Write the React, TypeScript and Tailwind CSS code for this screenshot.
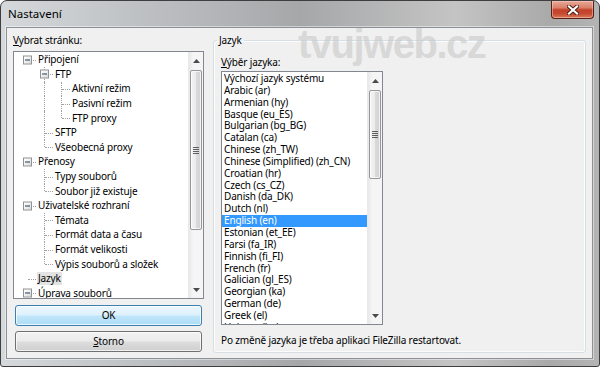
import React from 'react';

type Line = 'none' | 'full' | 'top';

interface TreeRow {
  label: string;
  level: number;
  box?: boolean;
  // vertical line per column, index = column
  cols: Line[];
  selected?: boolean;
}

const treeRows: TreeRow[] = [
  { label: 'Připojení', level: 0, box: true, cols: ['none'] },
  { label: 'FTP', level: 1, box: true, cols: ['none', 'full'] },
  { label: 'Aktivní režim', level: 2, cols: ['none', 'full', 'full'] },
  { label: 'Pasivní režim', level: 2, cols: ['none', 'full', 'full'] },
  { label: 'FTP proxy', level: 2, cols: ['none', 'full', 'top'] },
  { label: 'SFTP', level: 1, cols: ['none', 'full'] },
  { label: 'Všeobecná proxy', level: 1, cols: ['none', 'top'] },
  { label: 'Přenosy', level: 0, box: true, cols: ['none'] },
  { label: 'Typy souborů', level: 1, cols: ['none', 'full'] },
  { label: 'Soubor již existuje', level: 1, cols: ['none', 'top'] },
  { label: 'Uživatelské rozhraní', level: 0, box: true, cols: ['none'] },
  { label: 'Témata', level: 1, cols: ['none', 'full'] },
  { label: 'Formát data a času', level: 1, cols: ['none', 'full'] },
  { label: 'Formát velikosti', level: 1, cols: ['none', 'full'] },
  { label: 'Výpis souborů a složek', level: 1, cols: ['none', 'top'] },
  { label: 'Jazyk', level: 0, cols: ['none'], selected: true },
  { label: 'Úprava souborů', level: 0, box: true, cols: ['none'] },
];

const languages = [
  'Výchozí jazyk systému',
  'Arabic (ar)',
  'Armenian (hy)',
  'Basque (eu_ES)',
  'Bulgarian (bg_BG)',
  'Catalan (ca)',
  'Chinese (zh_TW)',
  'Chinese (Simplified) (zh_CN)',
  'Croatian (hr)',
  'Czech (cs_CZ)',
  'Danish (da_DK)',
  'Dutch (nl)',
  'English (en)',
  'Estonian (et_EE)',
  'Farsi (fa_IR)',
  'Finnish (fi_FI)',
  'French (fr)',
  'Galician (gl_ES)',
  'Georgian (ka)',
  'German (de)',
  'Greek (el)',
  'Hebrew (he)',
];

function PlusBox() {
  return (
    <span className="absolute left-[4px] top-1/2 z-10 flex h-[9px] w-[9px] -translate-y-1/2 items-center justify-center border border-[#919191] bg-[linear-gradient(135deg,#ffffff_0%,#f0f0f0_50%,#d6d6d6_100%)]">
      <span className="h-px w-[5px] bg-[#1f3b63]" />
    </span>
  );
}

function TreeCell({ line, own, box }: { line: Line; own: boolean; box?: boolean }) {
  return (
    <span className="relative h-full w-[17px] shrink-0">
      {line === 'full' && (
        <span className="absolute bottom-0 left-[8px] top-0 border-l border-dotted border-[#a0a0a0]" />
      )}
      {line === 'top' && (
        <span className="absolute left-[8px] top-0 h-1/2 border-l border-dotted border-[#a0a0a0]" />
      )}
      {own && (
        <span className="absolute left-[9px] right-0 top-1/2 border-t border-dotted border-[#a0a0a0]" />
      )}
      {own && box && <PlusBox />}
    </span>
  );
}

function ArrowUp() {
  return (
    <svg width="7" height="4" viewBox="0 0 7 4">
      <path d="M0 4 L3.5 0 L7 4 Z" fill="#4a4a4a" />
    </svg>
  );
}

function ArrowDown() {
  return (
    <svg width="7" height="4" viewBox="0 0 7 4">
      <path d="M0 0 L3.5 4 L7 0 Z" fill="#4a4a4a" />
    </svg>
  );
}

function Thumb({ className }: { className: string }) {
  return (
    <div
      className={`mx-[1px] flex items-center justify-center rounded-[2px] border border-[#979797] bg-[linear-gradient(90deg,#f4f4f4_0%,#ececec_45%,#dadada_55%,#d2d2d2_100%)] shadow-[inset_0_0_0_1px_rgba(255,255,255,0.7)] ${className}`}
    >
      <div className="flex w-[6px] flex-col gap-[1px]">
        <span className="h-px bg-[#5e5e5e]" />
        <span className="h-px bg-[#5e5e5e]" />
        <span className="h-px bg-[#5e5e5e]" />
        <span className="h-px bg-[#5e5e5e]" />
      </div>
    </div>
  );
}

function ScrollBar({ thumbClass }: { thumbClass: string }) {
  return (
    <div className="flex w-[15px] shrink-0 flex-col border-l border-[#e9e9e9] bg-[linear-gradient(90deg,#e8e8e8_0%,#f5f5f5_30%,#f5f5f5_100%)]">
      <div className="flex h-[17px] shrink-0 items-center justify-center">
        <ArrowUp />
      </div>
      <div className="flex-1">
        <Thumb className={thumbClass} />
      </div>
      <div className="flex h-[17px] shrink-0 items-center justify-center">
        <ArrowDown />
      </div>
    </div>
  );
}

function CloseButton() {
  return (
    <div className="absolute right-[5px] top-0 flex h-[18px] w-[43px] items-center justify-center rounded-b-[4px] border border-t-0 border-[#5a1f14] bg-[linear-gradient(180deg,#e8a898_0%,#d98068_40%,#c2412a_52%,#c74a30_75%,#d9795c_100%)] shadow-[inset_0_0_0_1px_rgba(255,220,210,0.45)]">
      <svg width="12" height="10" viewBox="0 0 12 10">
        <path d="M2 1.5 L10 8.5 M10 1.5 L2 8.5" stroke="#4a1a12" strokeWidth="4" strokeLinecap="square" />
        <path d="M2 1.5 L10 8.5 M10 1.5 L2 8.5" stroke="#ffffff" strokeWidth="2.2" strokeLinecap="square" />
      </svg>
    </div>
  );
}

export default function App() {
  return (
    <div className="relative flex h-[367px] w-[600px] flex-col overflow-hidden rounded-t-[7px] rounded-b-[3px] border border-[#3e3e3e] bg-[linear-gradient(90deg,#d6d9dc_0%,#bfc2c5_22%,#a6a7a9_50%,#c4c4c4_76%,#a9a9a9_92%,#b4b4b4_100%)] font-['Noto_Sans','Open_Sans',sans-serif] text-[10px] tracking-[-0.15px] text-black">
      {/* title bar */}
      <div className="flex h-[26px] shrink-0 items-center pl-[7px] text-[11.5px] tracking-normal">
        Nastavení
      </div>
      <CloseButton />

      {/* client area */}
      <div className="mb-[7px] ml-[5px] mr-[6px] flex flex-1 gap-[9px] border border-[#8b9197] bg-[#f0f0f0] px-[6px] pb-[5px] pt-[5px] shadow-[0_0_0_1px_rgba(255,255,255,0.45)]">
        {/* left column */}
        <div className="flex w-[191px] shrink-0 flex-col">
          <div className="h-[14px] leading-[14px]">
            <span className="underline">V</span>ybrat stránku:
          </div>
          <div className="mt-[4px] flex h-[248px] border border-[#828790] bg-white">
            <div className="flex-1 overflow-hidden pl-[5px] pt-[0.5px]">
              {treeRows.map((row) => (
                <div key={row.label} className="flex h-[14.6px] items-center">
                  {row.cols.map((line, i) => (
                    <TreeCell key={i} line={line} own={i === row.level} box={row.box} />
                  ))}
                  <span
                    className={`ml-[1px] whitespace-nowrap px-[1px] leading-[13px] ${
                      row.selected ? 'bg-[#e3e3e3]' : ''
                    }`}
                  >
                    {row.label}
                  </span>
                </div>
              ))}
            </div>
            <ScrollBar thumbClass="mt-[1px] h-[160px]" />
          </div>
          <button className="mx-[2px] mt-[6px] h-[21px] rounded-[3px] border border-[#3c7fb1] bg-[linear-gradient(180deg,#ecf7fd_0%,#ddf1fc_48%,#c1e6fb_52%,#acdcf6_100%)] shadow-[inset_0_0_0_1px_rgba(255,255,255,0.75)]">
            OK
          </button>
          <button className="mx-[2px] mt-[5px] h-[21px] rounded-[3px] border border-[#707070] bg-[linear-gradient(180deg,#f2f2f2_0%,#ebebeb_48%,#dddddd_52%,#cfcfcf_100%)] shadow-[inset_0_0_0_1px_rgba(255,255,255,0.7)]">
            <span className="underline">S</span>torno
          </button>
        </div>

        {/* right group box */}
        <fieldset className="flex-1 rounded-[3px] border border-[#d5dfe5] px-[7px] pb-[4px] shadow-[inset_0_0_0_1px_rgba(255,255,255,0.8)]">
          <legend className="ml-[-4px] px-[2px] leading-[14px]">Jazyk</legend>
          <div className="mt-[8px] h-[14px] leading-[14px]">
            <span className="underline">V</span>ýběr jazyka:
          </div>
          <div className="mt-[2px] flex h-[254px] w-[162px] border border-[#828790] bg-white">
            <div className="flex-1 overflow-hidden pt-[1px]">
              {languages.map((lang) => (
                <div
                  key={lang}
                  className={`flex h-[11.85px] items-center whitespace-nowrap pl-[2px] leading-[11.85px] ${
                    lang === 'English (en)' ? 'bg-[#3399ff] text-white' : ''
                  }`}
                >
                  {lang}
                </div>
              ))}
            </div>
            <ScrollBar thumbClass="mt-[1px] h-[89px]" />
          </div>
          <div className="mt-[8px] h-[14px] leading-[14px]">
            Po změně jazyka je třeba aplikaci FileZilla restartovat.
          </div>
        </fieldset>
      </div>

      {/* watermark */}
      <div className="pointer-events-none absolute left-[297px] top-[23px] font-['Liberation_Sans',Arial,sans-serif] text-[40px] font-bold leading-none tracking-[-1.5px] text-[rgba(200,200,200,0.6)]">
        tvujweb.cz
      </div>
    </div>
  );
}
